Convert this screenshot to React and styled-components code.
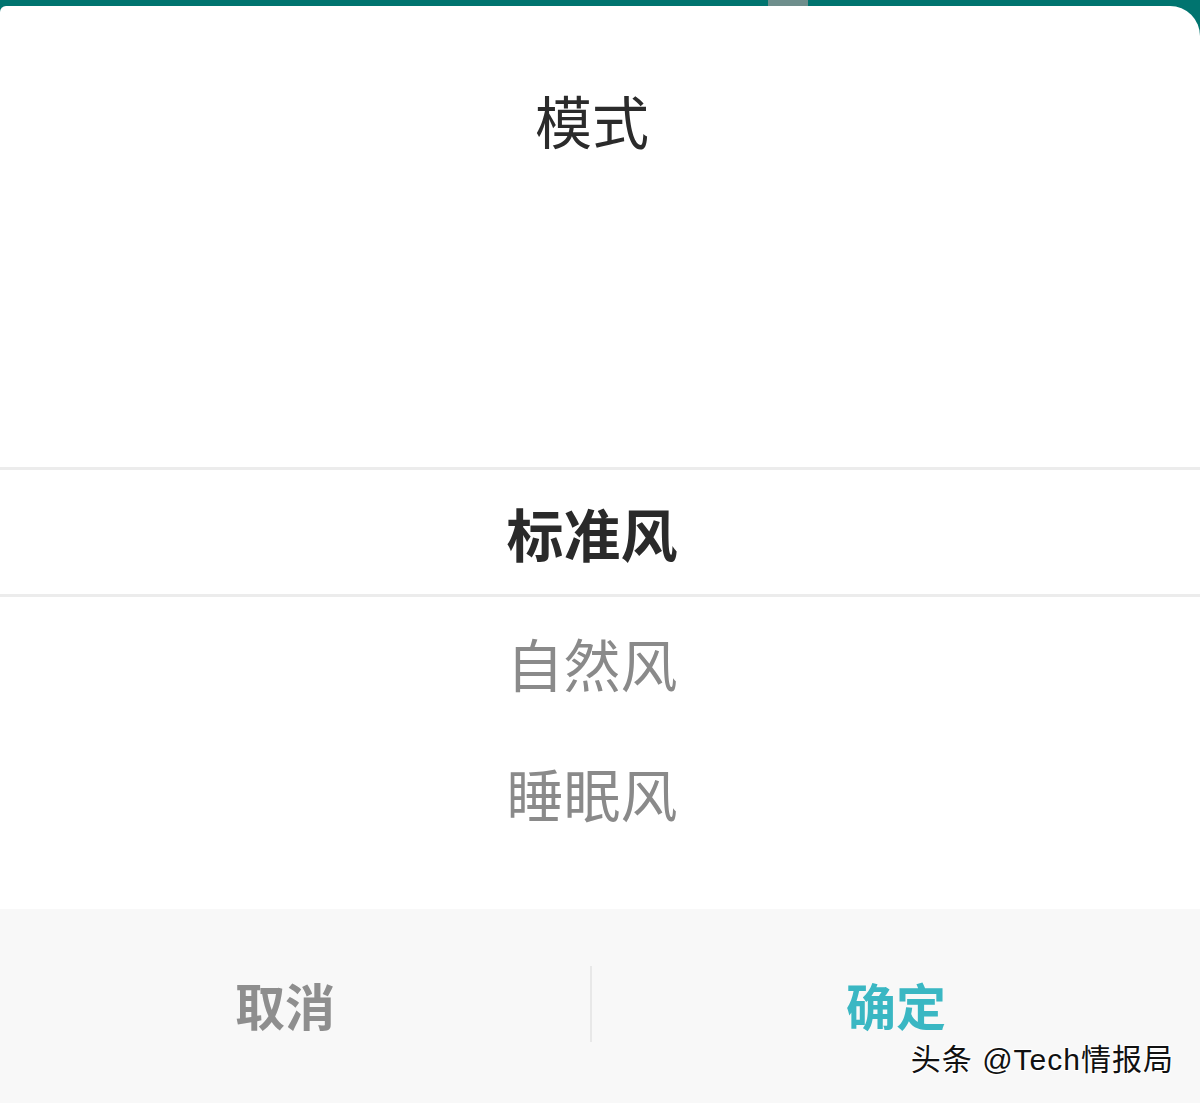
import React from 'react'
import styled, { createGlobalStyle } from 'styled-components'

const GlobalStyle = createGlobalStyle`
  html, body {
    margin: 0;
    padding: 0;
    background: #00746f;
  }
  body {
    font-family: "Noto Sans CJK SC", "Noto Sans", sans-serif;
  }
`

const options = [
  { label: '标准风', selected: true },
  { label: '自然风' },
  { label: '睡眠风' },
]

const App = () => (
  <Screen>
    <GlobalStyle />
    <StatusStrip>
      <Handle />
    </StatusStrip>
    <Sheet>
      <Header>
        <Title>模式</Title>
      </Header>
      <Picker>
        {options.map(o => (
          <Option key={o.label} selected={o.selected}>{o.label}</Option>
        ))}
      </Picker>
      <Footer>
        <FooterButton>取消</FooterButton>
        <Divider />
        <FooterButton primary>确定</FooterButton>
      </Footer>
      <Watermark>头条 @Tech情报局</Watermark>
    </Sheet>
  </Screen>
)

const Screen = styled.div`
  width: 1200px;
  height: 1103px;
  display: flex;
  flex-direction: column;
  overflow: hidden;
  background: #00746f;
`

const StatusStrip = styled.div`
  height: 6px;
  flex-shrink: 0;
  position: relative;
`

const Handle = styled.div`
  position: absolute;
  left: 768px;
  top: 0;
  width: 40px;
  height: 6px;
  background: #6e8e8c;
`

const Sheet = styled.div`
  flex: 1;
  position: relative;
  display: flex;
  flex-direction: column;
  background: #ffffff;
  border-radius: 6px 30px 0 0;
`

const Header = styled.div`
  height: 461px;
  display: flex;
  justify-content: center;
  padding-right: 16px;
  box-sizing: border-box;
`

const Title = styled.div`
  margin-top: 73px;
  font-size: 57px;
  line-height: 80px;
  color: #2b2b2b;
`

const Picker = styled.div`
  display: flex;
  flex-direction: column;
  height: 442px;
`

const Option = styled.div`
  height: ${p => (p.selected ? '124px' : '130px')};
  display: flex;
  align-items: center;
  justify-content: center;
  padding-right: 16px;
  font-size: 57px;
  font-weight: ${p => (p.selected ? 700 : 400)};
  color: ${p => (p.selected ? '#2a2a2a' : '#8a8a8a')};
  border-top: ${p => (p.selected ? '3px solid #ececec' : 'none')};
  border-bottom: ${p => (p.selected ? '3px solid #ececec' : 'none')};
`

const Footer = styled.div`
  flex: 1;
  display: flex;
  align-items: center;
  background: #f8f8f8;
  padding-bottom: 4px;
  box-sizing: border-box;
`

const FooterButton = styled.div`
  flex: ${p => (p.primary ? 1 : '0 0 590px')};
  box-sizing: border-box;
  text-align: center;
  font-size: 50px;
  font-weight: 700;
  color: ${p => (p.primary ? '#3ab7c3' : '#8e8e8e')};
  padding-right: ${p => (p.primary ? '0' : '20px')};
`

const Divider = styled.div`
  width: 2px;
  height: 76px;
  background: #e8e8e8;
`

const Watermark = styled.div`
  position: absolute;
  right: 26px;
  bottom: 24px;
  font-family: "Liberation Sans", "Noto Sans CJK SC", sans-serif;
  font-size: 30px;
  letter-spacing: 1px;
  color: #111111;
  text-shadow: -1px -1px 0 #fff, 1px 1px 0 #fff, 1px -1px 0 #fff, -1px 1px 0 #fff;
`

export default App
